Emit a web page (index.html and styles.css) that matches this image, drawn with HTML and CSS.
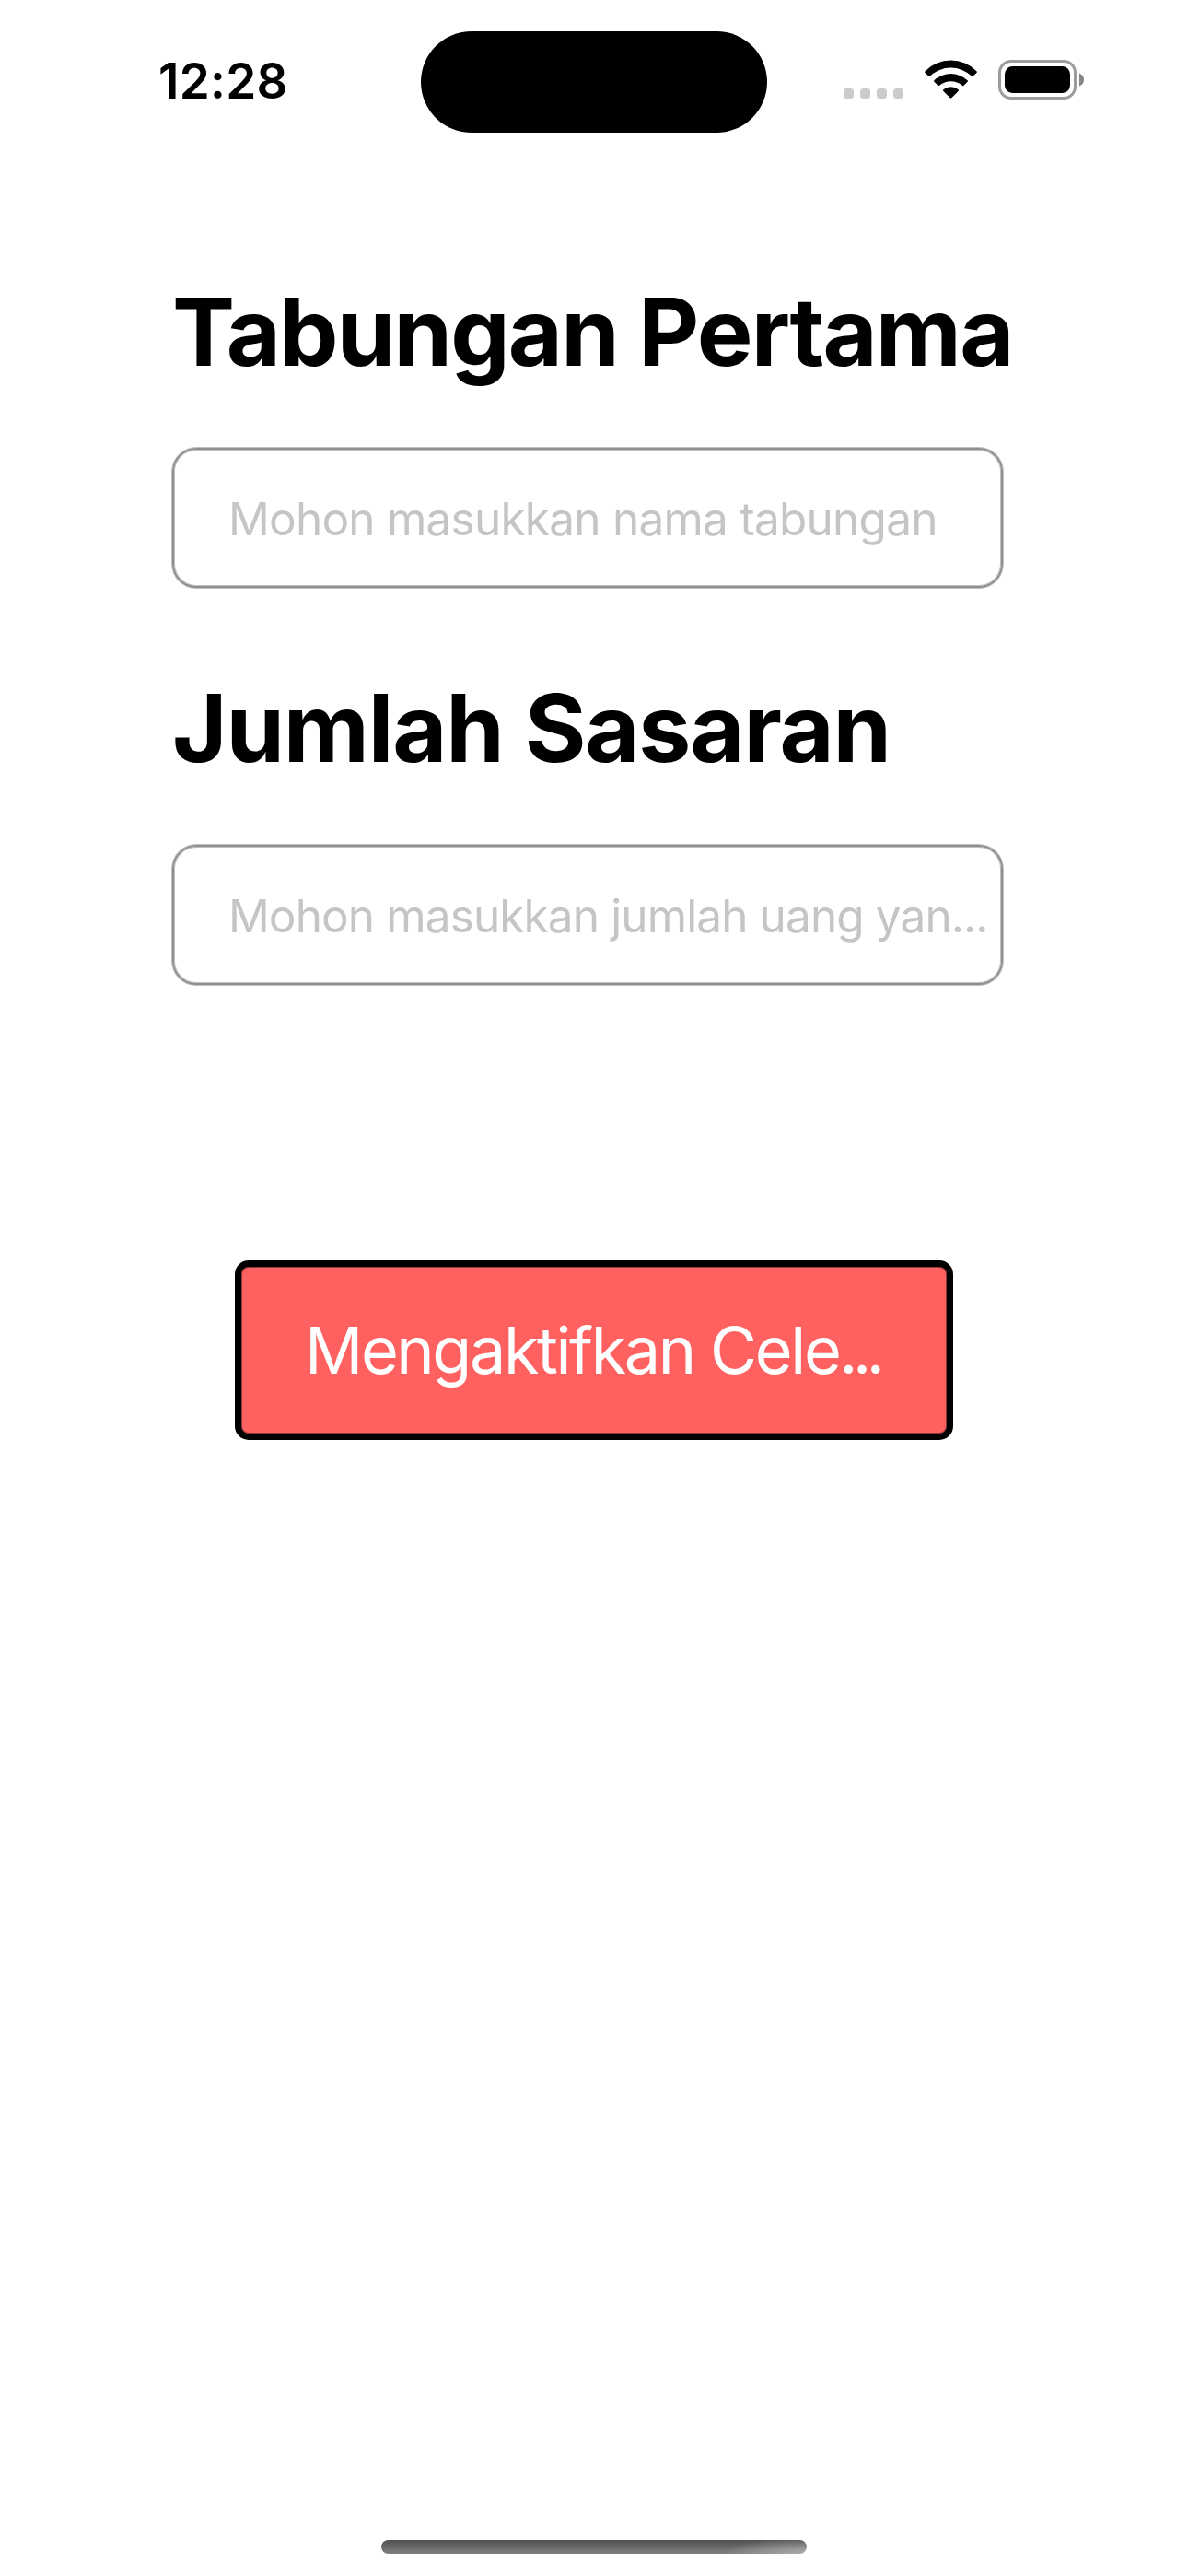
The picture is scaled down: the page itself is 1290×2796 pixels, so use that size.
FILE: index.html
```html
<!DOCTYPE html>
<html lang="id">
<head>
<meta charset="utf-8">
<title>Tabungan</title>
<link rel="stylesheet" href="styles.css">
</head>
<body>
<div class="screen">
  <header class="status">
    <div class="clock">12:28</div>
    <div class="island"></div>
    <div class="indicators">
      <svg class="cellular" width="65" height="11" viewBox="0 0 65 11" fill="#cbcbcb">
        <rect width="11" height="11" rx="3.5"/>
        <rect x="18" width="11" height="11" rx="3.5"/>
        <rect x="36" width="11" height="11" rx="3.5"/>
        <rect x="54" width="11" height="11" rx="3.5"/>
      </svg>
      <svg class="wifi" width="57" height="42" viewBox="0 0 57 42">
        <path d="M0.6 12.2A39 39 0 0 1 56.4 12.2Q57.3 13 56.5 13.9L52.5 17.7Q51.8 18.3 51 17.6A32.5 32.5 0 0 0 6 17.6Q5.2 18.3 4.5 17.7L0.5 13.9Q-0.3 13 0.6 12.2Z"/>
        <path d="M10.4 22.2A26.5 26.5 0 0 1 46.6 22.2Q47.4 23 46.6 23.8L42.4 27.9Q41.7 28.5 40.9 27.8A19 19 0 0 0 16.1 27.8Q15.3 28.5 14.6 27.9L10.4 23.8Q9.6 23 10.4 22.2Z"/>
        <path d="M20.4 32.2A12.6 12.6 0 0 1 36.6 32.2Q37.5 33 36.6 33.9L29.3 41.2Q28.5 42 27.7 41.2L20.4 33.9Q19.5 33 20.4 32.2Z"/>
      </svg>
      <svg class="battery" width="94" height="43" viewBox="0 0 94 43">
        <rect x="1.5" y="1.5" width="82" height="40" rx="12.5" fill="none" stroke="#9c9c9c" stroke-width="3"/>
        <rect x="7" y="7" width="71" height="29" rx="8.5"/>
        <path d="M88 14.5Q93 16.5 93 21.5Q93 26.5 88 28.5Z" fill="#858585"/>
      </svg>
    </div>
  </header>
  <main class="form">
    <section class="group">
      <h1 class="title">Tabungan Pertama</h1>
      <div class="field">Mohon masukkan nama tabungan</div>
    </section>
    <section class="group target">
      <h1 class="title">Jumlah Sasaran</h1>
      <div class="field">Mohon masukkan jumlah uang yan<span class="dots">...</span></div>
    </section>
    <button class="action">Mengaktifkan Cele<span class="dots">...</span></button>
  </main>
  <div class="home-bar"></div>
</div>
</body>
</html>
```
FILE: styles.css
```css
* { box-sizing: border-box; margin: 0; padding: 0; }
body { background: #fff; color: #000; font-family: Inter, "Liberation Sans", sans-serif; }
.screen {
  width: 1290px;
  height: 2796px;
  display: flex;
  flex-direction: column;
  overflow: hidden;
}
.status {
  display: grid;
  grid-template-columns: 457px 376px 1fr;
  align-items: center;
  height: 178px;
}
.clock {
  padding: 0 0 3px 172px;
  font-size: 53px;
  font-weight: 600;
  line-height: 64px;
  letter-spacing: 0.3px;
}
.island { height: 110px; border-radius: 55px; background: #000; }
.indicators { display: flex; align-items: flex-end; padding-left: 83px; margin-top: -5px; }
.cellular { margin-bottom: 1px; }
.wifi { margin: 0 23px 1px; }
.form { display: flex; flex-direction: column; padding: 120px 0 0 187px; }
.title {
  font-size: 102px;
  font-weight: 700;
  line-height: 124px;
  letter-spacing: -1.8px;
  white-space: nowrap;
}
.field {
  display: flex;
  align-items: center;
  width: 902px;
  height: 152px;
  margin-top: 64px;
  padding: 2px 0 0 59px;
  border: 2px solid #8e8e93;
  border-radius: 26px;
  box-shadow: 0 0 0 1px #c0c0c3, inset 0 0 0 1px #c0c0c3;
  color: #c5c5c7;
  font-size: 49.5px;
  letter-spacing: -0.76px;
  white-space: nowrap;
}
.target { margin-top: 90px; }
.target .title { letter-spacing: -1.15px; }
.target .field { margin-top: 65px; letter-spacing: -0.88px; }
.action {
  display: flex;
  align-items: center;
  width: 780px;
  height: 195px;
  margin: 299px 0 0 68px;
  padding-left: 69px;
  border: 7px solid #000;
  border-radius: 15px;
  box-shadow: inset 0 0 0 1px #8f3636;
  background: #ff6160;
  color: #fff;
  font: 400 70px Inter, "Liberation Sans", sans-serif;
  letter-spacing: -2.35px;
  white-space: nowrap;
}
.action .dots { letter-spacing: -5.5px; }
.field .dots { letter-spacing: -1px; }
.home-bar {
  width: 462px;
  height: 15px;
  margin: auto auto 24px;
  border-radius: 7.5px;
  background:
    radial-gradient(90px 18px at 100% 100%, rgba(185, 185, 185, 0.8), rgba(185, 185, 185, 0)),
    linear-gradient(#505050, #808080);
}
```
